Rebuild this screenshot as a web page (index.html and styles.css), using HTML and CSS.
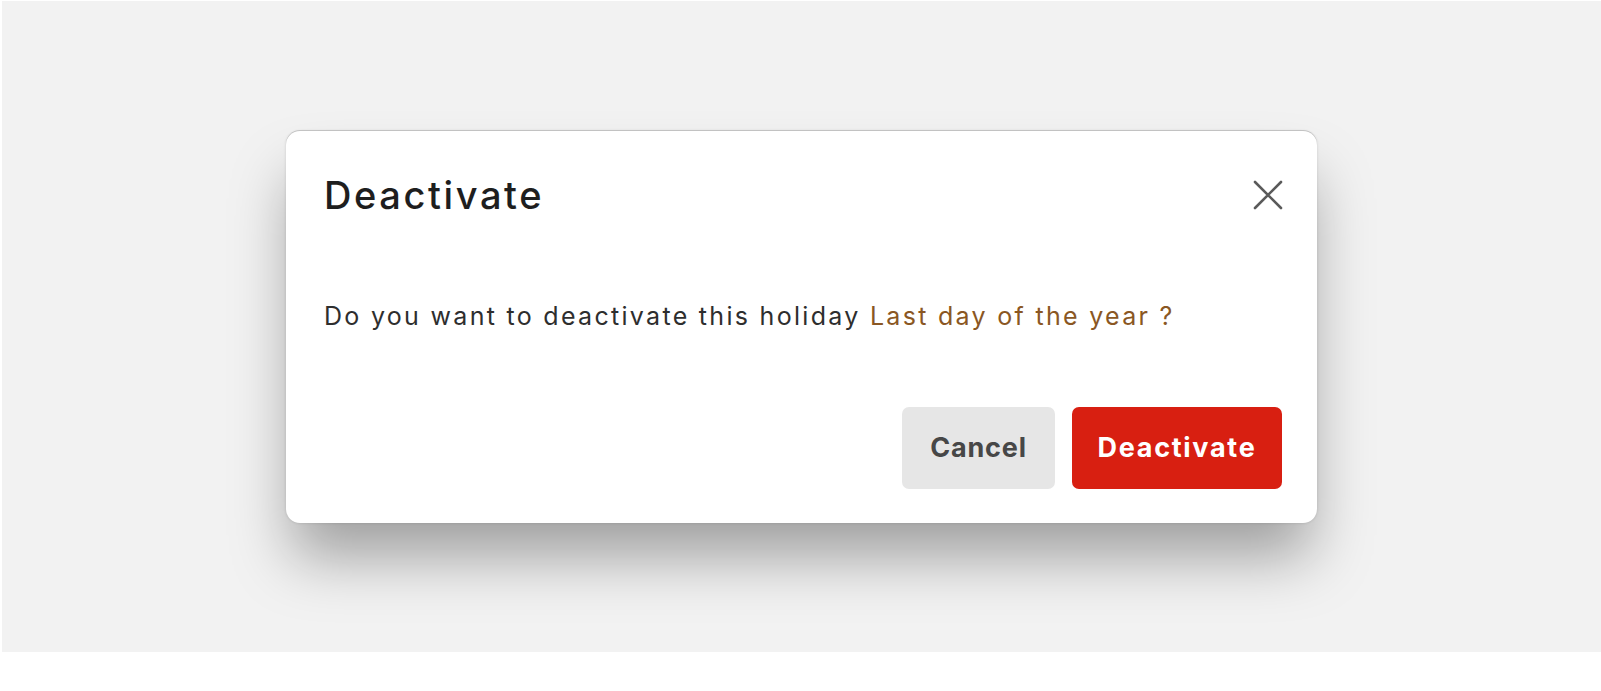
FILE: index.html
```html
<!DOCTYPE html>
<html lang="en">
<head>
<meta charset="utf-8">
<title>Deactivate</title>
<link rel="stylesheet" href="styles.css">
</head>
<body>
<div class="stage">
  <div class="modal" role="dialog">
    <div class="modal-header">
      <h2 class="modal-title">Deactivate</h2>
      <button class="close-btn" aria-label="Close">
        <svg viewBox="0 0 30 30" width="30" height="30"><path d="M2 2 L28 28 M28 2 L2 28" stroke="#5a5a5a" stroke-width="2.6" stroke-linecap="round" fill="none"/></svg>
      </button>
    </div>
    <p class="modal-body">Do you want to deactivate this holiday <span class="hl">Last day of the year ?</span></p>
    <div class="modal-footer">
      <button class="btn btn-cancel">Cancel</button>
      <button class="btn btn-danger">Deactivate</button>
    </div>
  </div>
</div>
</body>
</html>
```
FILE: styles.css
```css
html, body {
  margin: 0;
  padding: 0;
  background: #ffffff;
  font-family: Inter, "Noto Sans", sans-serif;
}

.stage {
  margin: 1px 0 0 2px;
  height: 651px;
  background: #f2f2f2;
  display: flex;
  align-items: center;
  justify-content: center;
}

.modal {
  width: 1031px;
  height: 392px;
  box-sizing: border-box;
  background: #ffffff;
  border-radius: 14px;
  padding: 40px 35px 34px 38px;
  display: flex;
  flex-direction: column;
  box-shadow: 0 -1px 0 rgba(0, 0, 0, 0.14), 0 0 3px rgba(0, 0, 0, 0.14), 0 40px 60px -6px rgba(0, 0, 0, 0.34);
}

.modal-header {
  display: flex;
  align-items: center;
  justify-content: space-between;
  height: 48px;
}

.modal-title {
  margin: 0;
  font-size: 38px;
  line-height: 48px;
  font-weight: 500;
  color: #1e1e1e;
  letter-spacing: 2.6px;
}

.close-btn {
  border: 0;
  padding: 0;
  background: none;
  width: 30px;
  height: 30px;
  display: flex;
  margin-right: -1px;
}

.modal-body {
  margin: 81px 0 0 0;
  font-family: Inter, "Noto Sans", sans-serif;
  font-size: 25px;
  line-height: 32px;
  color: #2e2e2e;
  letter-spacing: 2.3px;
}

.hl {
  color: #8a5723;
}

.modal-footer {
  margin-top: auto;
  display: flex;
  justify-content: flex-end;
  gap: 17px;
}

.btn {
  height: 82px;
  border: 0;
  border-radius: 7px;
  font-family: Inter, "Noto Sans", sans-serif;
  font-size: 27px;
  font-weight: 700;
  padding: 0;
}

.btn-cancel {
  width: 153px;
  background: #e6e6e6;
  color: #474747;
  letter-spacing: 0.8px;
}

.btn-danger {
  width: 210px;
  background: #d81f11;
  color: #ffffff;
  letter-spacing: 1.7px;
}
```
